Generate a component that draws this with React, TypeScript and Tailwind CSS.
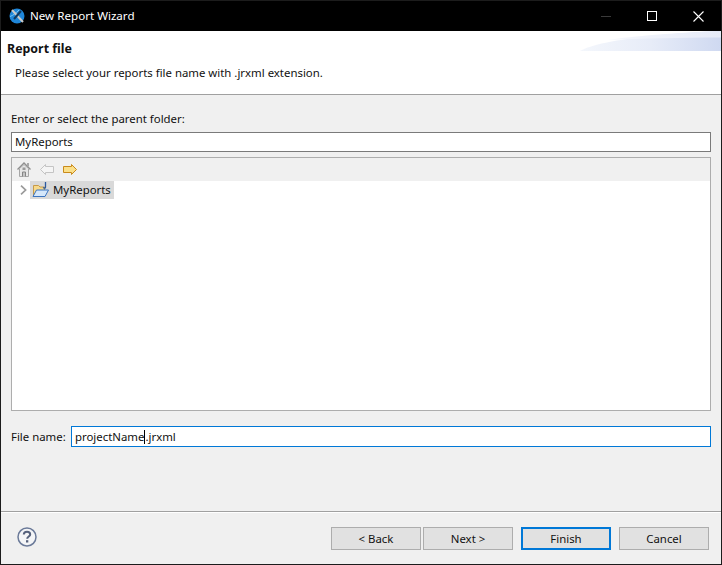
import React from 'react';

const font = "font-['Noto_Sans',sans-serif]";

const AppIcon = () => (
  <svg width="16" height="16" viewBox="0 0 16 16" className="shrink-0">
    <circle cx="8" cy="8" r="7.5" fill="#1f86d8" />
    <path d="M1 8.5C4 7.5 7 5 10 2" stroke="#7cc4f2" strokeWidth="1" fill="none" />
    <path d="M3 2L14 14" stroke="#c9c9c9" strokeWidth="2" />
    <path d="M12 3L5 11" stroke="#10395f" strokeWidth="2" />
  </svg>
);

const HomeIcon = () => (
  <svg width="14" height="15" viewBox="0 0 14 15" className="shrink-0">
    <path d="M0.5 7.5L7 1L13.5 7.5" fill="none" stroke="#8f8f8f" strokeWidth="1.4" />
    <path d="M2.5 6.5L7 2.5L11.5 6.5V14.5H2.5Z" fill="#e6e6e6" stroke="#a6a6a6" />
    <rect x="5.5" y="5.5" width="3" height="2.5" fill="#9a9a9a" />
    <path d="M5.5 14.5V10H8.5V14.5" fill="#c4c4c4" stroke="#858585" />
    <rect x="10" y="1" width="2" height="3.5" fill="#a8a8a8" />
  </svg>
);

const ArrowIcon = ({ fill, stroke, flip }: { fill: string; stroke: string; flip?: boolean }) => (
  <svg width="14" height="11" viewBox="0 0 14 11" className={'shrink-0 ' + (flip ? '-scale-x-100' : '')}>
    <path d="M0.5 2.5H8.5V0.5L13.5 5.5L8.5 10.5V8.5H0.5Z" fill={fill} stroke={stroke} strokeLinejoin="round" />
  </svg>
);

const FolderIcon = () => (
  <svg width="17" height="16" viewBox="0 0 17 16" className="shrink-0">
    <path d="M1.5 3.5H6.5L8 5H12.5V13.5H1.5Z" fill="#f7d98a" stroke="#c79a48" />
    <path d="M1 14.5L4.5 8H16.5L13 14.5Z" fill="#d5e7fa" stroke="#3b74c0" />
    <path d="M13.5 0V5.2C13.5 6.4 11.8 6.4 11.2 5.4" fill="none" stroke="#2c5aa0" strokeWidth="1.3" />
  </svg>
);

const HelpIcon = () => (
  <svg width="20" height="20" viewBox="0 0 20 20">
    <circle cx="10" cy="10" r="9" fill="#f4f5f7" stroke="#6b7a99" strokeWidth="1.5" />
    <path d="M6.8 7.6C6.8 5.8 8.2 4.8 10 4.8C11.9 4.8 13.2 5.8 13.2 7.4C13.2 9.5 10.2 9.6 10.2 11.8" fill="none" stroke="#56617c" strokeWidth="2" />
    <rect x="9" y="13.2" width="2.3" height="2.3" fill="#56617c" />
  </svg>
);

const Button = ({ label, primary }: { label: string; primary?: boolean }) => (
  <div
    className={
      'w-[90px] h-[23px] flex items-center justify-center bg-[#e1e1e1] ' +
      (primary ? 'border-2 border-[#0078d7]' : 'border border-[#adadad]')
    }
  >
    {label}
  </div>
);

const App = () => {
  return (
    <div className={`w-[722px] h-[565px] flex flex-col overflow-hidden bg-[#f0f0f0] border border-t-0 border-[#1c1c1c] text-[11.4px] leading-none text-[#111] ${font}`}>
      {/* title bar */}
      <div className="h-[31px] shrink-0 flex items-center bg-black border-t border-[#1c1c1c] text-white text-[11.6px] pl-[8px]">
        <AppIcon />
        <span className="ml-[5px]">New Report Wizard</span>
        <div className="ml-auto flex items-center">
          <div className="w-[46px] flex justify-center"><div className="w-[10px] h-px bg-[#3a3a3a]" /></div>
          <div className="w-[46px] flex justify-center"><div className="w-[10px] h-[10px] border border-white" /></div>
          <div className="w-[46px] flex justify-center">
            <svg width="11" height="11" viewBox="0 0 11 11"><path d="M0.5 0.5L10.5 10.5M10.5 0.5L0.5 10.5" stroke="#fff" strokeWidth="1.1" /></svg>
          </div>
        </div>
      </div>

      {/* banner */}
      <div className="relative h-[64px] shrink-0 bg-white border-b border-[#a0a0a0] pl-[6px] pt-[11px]">
        <svg width="141" height="20" viewBox="0 0 141 20" className="absolute right-0 top-0">
          <defs>
            <linearGradient id="g1" x1="0" x2="1" y1="0" y2="0">
              <stop offset="0" stopColor="#f4f7fc" />
              <stop offset="0.5" stopColor="#e7ecf8" />
              <stop offset="1" stopColor="#cfd9f1" />
            </linearGradient>
            <linearGradient id="g2" x1="0" x2="1" y1="0" y2="0">
              <stop offset="0" stopColor="#f6f8fd" />
              <stop offset="1" stopColor="#e6ebf8" />
            </linearGradient>
          </defs>
          <path d="M0 20C12 13 50 4 141 0V20Z" fill="url(#g1)" />
          <path d="M28 9C60 7.5 100 6.5 141 6.5V0C90 2 55 5 28 9Z" fill="url(#g2)" />
        </svg>
        <div className="relative font-bold text-[12.4px] h-[15px] flex items-center">Report file</div>
        <div className="relative mt-[8px] ml-[8px] h-[15px] flex items-center">Please select your reports file name with .jrxml extension.</div>
      </div>

      {/* body */}
      <div className="flex-1 flex flex-col px-[10px]">
        <div className="mt-[16px] h-[15px] flex items-center">Enter or select the parent folder:</div>
        <div className="mt-[6px] h-[20px] shrink-0 flex items-center bg-white border border-[#7a7a7a] pl-[3px]">MyReports</div>

        <div className="mt-[5px] h-[254px] shrink-0 flex flex-col bg-white border border-[#adadad]">
          <div className="h-[23px] shrink-0 bg-[#f0f0f0] flex items-center pl-[5px]">
            <HomeIcon />
            <div className="ml-[9px]"><ArrowIcon fill="#f5f5f5" stroke="#c4c4c4" flip /></div>
            <div className="ml-[9px]"><ArrowIcon fill="#fbe08a" stroke="#c98a1b" /></div>
          </div>
          <div className="h-[18px] shrink-0 flex items-center pl-[8px]">
            <svg width="7" height="10" viewBox="0 0 7 10" className="shrink-0"><path d="M1 0.7L5.6 5L1 9.3" fill="none" stroke="#9a9a9a" strokeWidth="1.7" /></svg>
            <div className="ml-[3px] h-[18px] flex items-center bg-[#d9d9d9] pl-[2px] pr-[3px]">
              <FolderIcon />
              <span className="ml-[4px]">MyReports</span>
            </div>
          </div>
        </div>

        <div className="mt-[15px] h-[21px] shrink-0 flex items-center">
          <span className="w-[60px]">File name:</span>
          <div className="flex-1 h-[21px] flex items-center bg-white border border-[#0078d7] pl-[3px]">
            <span>projectName</span>
            <span className="w-px h-[14px] bg-black" />
            <span>.jrxml</span>
          </div>
        </div>
      </div>

      {/* footer */}
      <div className="h-[53px] shrink-0 border-t border-[#a0a0a0] flex flex-col">
        <div className="flex-1 border-t border-white flex items-start pt-[14px] pl-[16px] pr-[12px]">
          <HelpIcon />
          <div className="ml-auto flex items-center">
            <Button label="< Back" />
            <div className="w-[2px]" />
            <Button label="Next >" />
            <div className="w-[8px]" />
            <Button label="Finish" primary />
            <div className="w-[8px]" />
            <Button label="Cancel" />
          </div>
        </div>
      </div>
    </div>
  );
};

export default App;
